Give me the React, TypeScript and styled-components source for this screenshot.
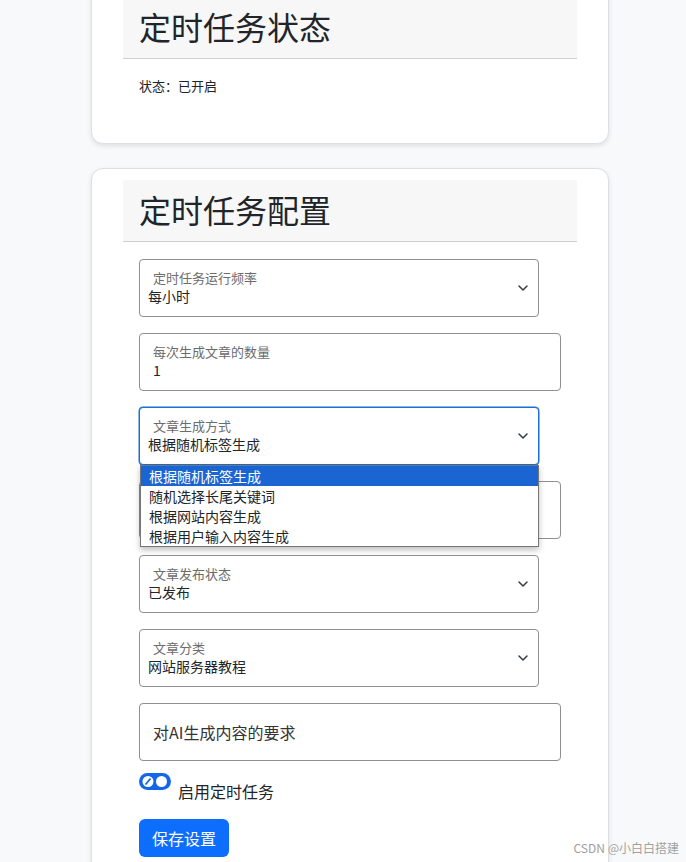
import React from "react";
import styled, { createGlobalStyle } from "styled-components";

const GlobalStyle = createGlobalStyle`
  html, body {
    margin: 0;
    padding: 0;
    background: #f8f9fa;
    font-family: "Noto Sans CJK SC", "Noto Sans", sans-serif;
    color: #212529;
    overflow: hidden;
  }
`;

const Page = styled.div`
  width: 686px;
  height: 862px;
  overflow: hidden;
  position: relative;
`;

const Column = styled.div`
  width: 518px;
  margin: -15px 0 0 91px;
  display: flex;
  flex-direction: column;
  gap: 24px;
`;

const Card = styled.section<{ $tail?: number }>`
  background: #fff;
  border: 1px solid #dcdfe3;
  border-radius: 12px;
  box-shadow: 0 2px 5px rgba(0, 0, 0, 0.1);
  padding: 11px 31px ${(p) => p.$tail ?? 0}px;
`;

const CardHeader = styled.div`
  background: #f7f7f7;
  border-bottom: 1px solid #cfcfcf;
  padding: 0 16px 3px;
  height: 62px;
  box-sizing: border-box;
  display: flex;
  align-items: center;
`;

const Title = styled.h2`
  margin: 0;
  font-size: 32px;
  font-weight: 400;
  color: #212529;
  line-height: 1;
`;

const StatusText = styled.p`
  margin: 0;
  padding: 17px 16px 47px;
  font-size: 13px;
  line-height: 20px;
  color: #212529;
`;

const Form = styled.form`
  padding: 17px 16px 0;
  display: flex;
  flex-direction: column;
  gap: 16px;
`;

const Field = styled.div<{ $wide?: boolean; $focus?: boolean }>`
  position: relative;
  box-sizing: border-box;
  width: ${(p) => (p.$wide ? "422px" : "400px")};
  height: 58px;
  border: 1px solid ${(p) => (p.$focus ? "#1a6fd0" : "#8f8f8f")};
  box-shadow: ${(p) => (p.$focus ? "0 0 0 0.5px #1a6fd0" : "none")};
  border-radius: 4px;
  background: #fff;
  padding: 0 12px;
  display: flex;
  flex-direction: column;
  justify-content: center;
`;

const FloatLabel = styled.span`
  font-size: 13px;
  line-height: 16px;
  color: #6c6c6c;
  padding-left: 1px;
`;

const Value = styled.span<{ $select?: boolean }>`
  font-size: 14px;
  line-height: 20px;
  color: #212529;
  margin-left: ${(p) => (p.$select ? "-4px" : "1px")};
`;

const BigLabel = styled.span`
  font-size: 16px;
  color: #333;
  padding-left: 1px;
`;

const Chevron = styled.svg`
  position: absolute;
  right: 9px;
  top: 50%;
  margin-top: -5px;
`;

const DropList = styled.ul`
  position: absolute;
  left: 0;
  top: 57px;
  width: 399px;
  box-sizing: border-box;
  margin: 0;
  padding: 0;
  list-style: none;
  background: #fff;
  border: 1px solid #767676;
  box-shadow: 0 3px 6px rgba(0, 0, 0, 0.25);
  z-index: 5;
`;

const DropItem = styled.li<{ $active?: boolean }>`
  height: 20px;
  line-height: 20px;
  font-size: 14px;
  padding-left: 8px;
  background: ${(p) => (p.$active ? "#1b65d3" : "transparent")};
  color: ${(p) => (p.$active ? "#fff" : "#212529")};
`;

const SwitchRow = styled.label`
  display: flex;
  align-items: flex-start;
  gap: 7px;
  margin-top: -4px;
`;

const SwitchLabel = styled.span`
  font-size: 16px;
  line-height: 22px;
  margin-top: 7px;
  color: #212529;
`;

const SaveButton = styled.button`
  align-self: flex-start;
  width: 90px;
  height: 38px;
  border: none;
  border-radius: 6px;
  background: #0d6efd;
  color: #fff;
  font-family: inherit;
  font-size: 16px;
  margin-top: 1px;
`;

const Watermark = styled.div`
  position: absolute;
  right: 7px;
  bottom: 6px;
  font-size: 12px;
  color: #a0a0a0;
  text-shadow: 0 0 2px #fff;
`;

const ChevronIcon = () => (
  <Chevron width="12" height="10" viewBox="0 0 12 10">
    <path d="M2 3l4 4 4-4" fill="none" stroke="#343a40" strokeWidth="1.5" strokeLinecap="round" strokeLinejoin="round" />
  </Chevron>
);

const SwitchIcon = () => (
  <svg width="32" height="17" viewBox="0 0 32 17">
    <rect x="0" y="0" width="32" height="17" rx="8.5" fill="#1566e6" />
    <circle cx="9" cy="8.5" r="5.5" fill="#fff" />
    <path d="M6.5 11.5l5-6" stroke="#1566e6" strokeWidth="1.8" />
    <circle cx="22.5" cy="8.5" r="5.5" fill="#fff" />
  </svg>
);

type SelectProps = { label: string; value: string; focus?: boolean; children?: React.ReactNode };

const SelectField = ({ label, value, focus, children }: SelectProps) => (
  <Field $focus={focus}>
    <FloatLabel>{label}</FloatLabel>
    <Value $select>{value}</Value>
    <ChevronIcon />
    {children}
  </Field>
);

const methods = ["根据随机标签生成", "随机选择长尾关键词", "根据网站内容生成", "根据用户输入内容生成"];

export default function App() {
  return (
    <Page>
      <GlobalStyle />
      <Column>
        <Card>
          <CardHeader>
            <Title>定时任务状态</Title>
          </CardHeader>
          <StatusText>状态：已开启</StatusText>
        </Card>
        <Card $tail={40}>
          <CardHeader>
            <Title>定时任务配置</Title>
          </CardHeader>
          <Form>
            <SelectField label="定时任务运行频率" value="每小时" />
            <Field $wide>
              <FloatLabel>每次生成文章的数量</FloatLabel>
              <Value>1</Value>
            </Field>
            <SelectField label="文章生成方式" value="根据随机标签生成" focus>
              <DropList>
                {methods.map((m, i) => (
                  <DropItem key={m} $active={i === 0}>
                    {m}
                  </DropItem>
                ))}
              </DropList>
            </SelectField>
            {/* covered by the open dropdown above */}
            <Field $wide />
            <SelectField label="文章发布状态" value="已发布" />
            <SelectField label="文章分类" value="网站服务器教程" />
            <Field $wide>
              <BigLabel>对AI生成内容的要求</BigLabel>
            </Field>
            <SwitchRow>
              <SwitchIcon />
              <SwitchLabel>启用定时任务</SwitchLabel>
            </SwitchRow>
            <SaveButton type="button">保存设置</SaveButton>
          </Form>
        </Card>
      </Column>
      <Watermark>CSDN @小白白搭建</Watermark>
    </Page>
  );
}
